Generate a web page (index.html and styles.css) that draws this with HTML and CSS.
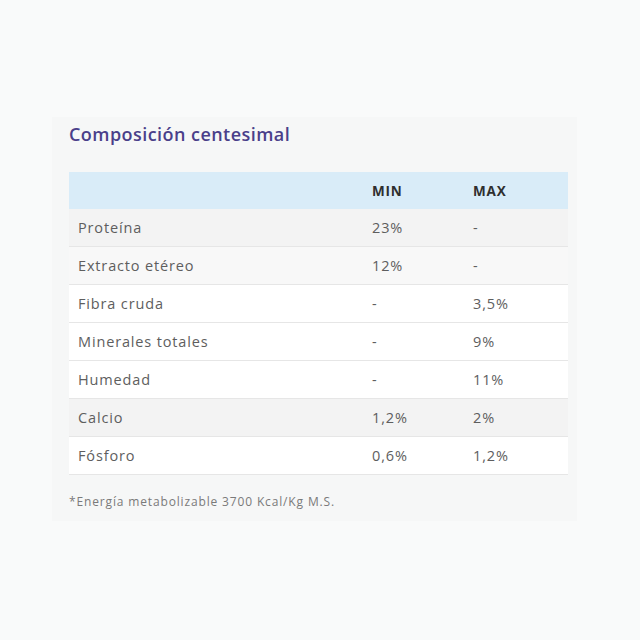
FILE: index.html
```html
<!DOCTYPE html>
<html lang="es">
<head>
<meta charset="utf-8">
<title>Composición centesimal</title>
<link rel="stylesheet" href="styles.css">
</head>
<body>
<section class="panel">
  <h2 class="title">Composición centesimal</h2>
  <table class="comp">
    <thead>
      <tr><th class="c1"></th><th class="c2">MIN</th><th class="c3">MAX</th></tr>
    </thead>
    <tbody>
      <tr class="g1"><td>Proteína</td><td>23%</td><td>-</td></tr>
      <tr class="g2"><td>Extracto etéreo</td><td>12%</td><td>-</td></tr>
      <tr><td>Fibra cruda</td><td>-</td><td>3,5%</td></tr>
      <tr><td>Minerales totales</td><td>-</td><td>9%</td></tr>
      <tr><td>Humedad</td><td>-</td><td>11%</td></tr>
      <tr class="g1"><td>Calcio</td><td>1,2%</td><td>2%</td></tr>
      <tr><td>Fósforo</td><td>0,6%</td><td>1,2%</td></tr>
    </tbody>
  </table>
  <p class="note">*Energía metabolizable 3700 Kcal/Kg M.S.</p>
</section>
</body>
</html>
```
FILE: styles.css
```css
html, body {
  margin: 0;
  padding: 0;
  background: #f9fafa;
}
body {
  padding: 117px 63px 0 52px;
  font-family: "Open Sans", "Liberation Sans", sans-serif;
}
.panel {
  width: 525px;
  box-sizing: border-box;
  background: #f6f7f7;
  padding: 1px 9px 10px 17px;
}
.title {
  margin: 2px 0 0 0;
  height: 28px;
  font-family: "Open Sans", sans-serif;
  font-weight: 600;
  font-size: 18px;
  line-height: 28px;
  color: #4a3f8a;
  letter-spacing: 0.45px;
}
.comp {
  margin-top: 24px;
  width: 499px;
  border-collapse: collapse;
  font-size: 14.5px;
  color: #5e5e5e;
  letter-spacing: 0.85px;
}
.comp th, .comp td {
  text-align: left;
  padding: 0 9px;
  height: 37px;
  font-weight: 400;
}
.comp thead th {
  background: #d9ecf8;
  font-weight: 700;
  color: #2f2f2f;
  font-size: 13.5px;
  letter-spacing: 0.8px;
}
.comp .c1 { width: 276px; }
.comp .c2 { width: 83px; }
.comp tbody tr {
  background: #ffffff;
  border-bottom: 1px solid #e6e6e6;
}
.comp tbody tr.g1 { background: #f3f3f3; }
.comp tbody tr.g2 { background: #f8f8f8; }
.note {
  margin: 18px 0 0 0;
  font-size: 12px;
  line-height: 18px;
  color: #7a7a7a;
  letter-spacing: 0.85px;
}
```
